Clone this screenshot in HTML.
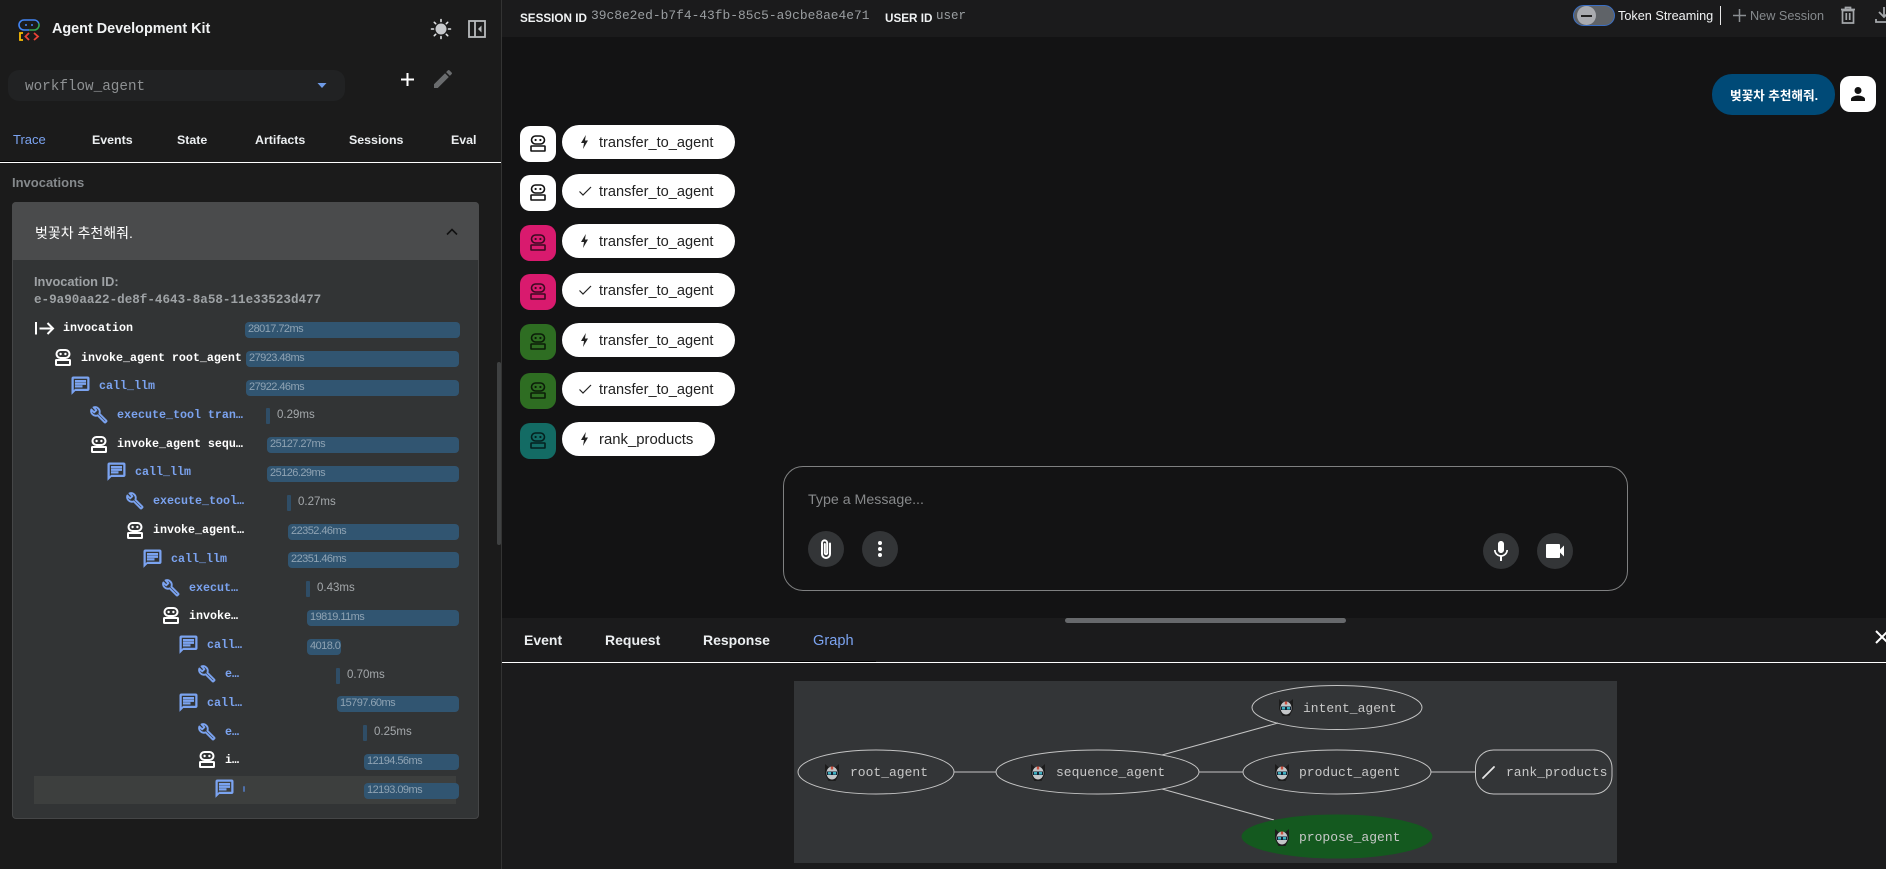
<!DOCTYPE html>
<html lang="en"><head><meta charset="utf-8"><title>Agent Development Kit</title>
<style>
html,body{margin:0;padding:0;width:1886px;height:869px;overflow:hidden;background:#131314}
body{position:relative;font-family:"Liberation Sans","Noto Sans CJK KR",sans-serif;color:#fff}
.a,.t,.m,.b,.n,.av,.p,.i{position:absolute}
.t{white-space:nowrap;line-height:16px;height:16px}
.m{white-space:nowrap;font-family:"Liberation Mono","Noto Sans CJK KR",monospace;line-height:16px;height:16px}
.tab{font-size:14px;font-weight:700;color:#eceff1}
.tab2{font-size:12.400px;font-weight:700;color:#eceff1}
.tr{font-size:11.670px;font-weight:700;color:#fff;margin-top:1px}
.bl{color:#7ba3f0}
.b{height:16px;background:#315571;border-radius:4px;overflow:hidden;font-size:11px;letter-spacing:-.55px;line-height:15px;color:#8fa3b3;white-space:nowrap;padding-left:3px;box-sizing:border-box}
.n{font-size:11.500px;color:#a4a8ab;line-height:16px;white-space:nowrap;margin-top:1px}
.bs{width:4px;height:16px;background:#2f4d66;position:absolute;border-radius:1px}
.av{left:520px;width:36px;height:36px;border-radius:10px}
.av svg{position:absolute;left:10px;top:9px}
.p{left:562px;width:173px;height:34px;background:#fff;border-radius:17px;color:#222;font-size:14.600px;line-height:34px;white-space:nowrap}
.p span{position:absolute;left:37px;top:1px}
.p svg{position:absolute;left:14px;top:8px}
.c{position:absolute;width:36px;height:36px;border-radius:50%;background:#333537}
.c svg{position:absolute;left:6px;top:6px}
</style></head><body>
<svg width="0" height="0" style="position:absolute">
<defs>
<symbol id="rb" viewBox="0 0 16 17"><rect x="1.500" y="1" width="13" height="8" rx="4" fill="none" stroke="currentColor" stroke-width="2"/><circle cx="5.600" cy="5" r="1.200" fill="currentColor"/><circle cx="10.400" cy="5" r="1.200" fill="currentColor"/><rect x="1" y="11" width="14" height="5" rx=".5" fill="none" stroke="currentColor" stroke-width="2"/></symbol>
<symbol id="rb2" viewBox="0 0 16 17"><rect x="1.500" y="1" width="13" height="8" rx="4" fill="none" stroke="currentColor" stroke-width="1.600"/><circle cx="5.600" cy="5" r="1.100" fill="currentColor"/><circle cx="10.400" cy="5" r="1.100" fill="currentColor"/><rect x="1" y="11" width="14" height="5" rx=".5" fill="none" stroke="currentColor" stroke-width="1.600"/></symbol>
<symbol id="ch" viewBox="0 0 24 24"><path fill="#7ba3f0" stroke="#7ba3f0" stroke-width=".6" d="M20 2H4c-1.100 0-2 .9-2 2v18l4-4h14c1.100 0 2-.9 2-2V4c0-1.100-.9-2-2-2zm0 14H6l-2 2V4h16v12zM6 12h8v2H6zm0-3h12v2H6zm0-3h12v2H6z"/></symbol>
<symbol id="wr" viewBox="0 0 24 24"><path fill="none" stroke="#7ba3f0" stroke-width="2.500" stroke-linejoin="round" d="M21.800 19.500l-9.300-9.300c.9-2.300.4-5-1.500-6.900-1.700-1.700-4.200-2.200-6.300-1.500L8.500 5.600 5.600 8.500 1.800 4.700c-.7 2.100-.2 4.600 1.500 6.300 1.900 1.900 4.600 2.400 6.900 1.500l9.300 9.300c.3.300.8.300 1.100 0l1.200-1.200c.3-.3.3-.7 0-1.100z"/></symbol>
<symbol id="bo" viewBox="0 0 18 18"><path fill="#222" d="M9.800 2L5 10h3l-1 6 5-8.500H9z"/></symbol>
<symbol id="ck" viewBox="0 0 18 18"><path fill="none" stroke="#222" stroke-width="1.200" d="M3.500 9.500l3.500 3.500 8-8"/></symbol>
<symbol id="bot" viewBox="0 0 16 17"><path d="M1 0l3.500 3h7L15 0v10l-3.500 7h-7L1 10z" fill="#1c1c1c"/><ellipse cx="8" cy="9" rx="5.500" ry="6.500" fill="#c4c6c8"/><rect x="6.800" y="2.500" width="2.400" height="3" fill="#c9503f"/><rect x="3" y="7.500" width="10" height="3.500" fill="#123"/><rect x="4" y="8" width="3" height="2.500" fill="#3fb0c0"/><rect x="9" y="8" width="3" height="2.500" fill="#3fb0c0"/></symbol>
</defs></svg>

<!-- sidebar -->
<div class="a" style="left:0;top:0;width:501px;height:869px;background:#1b1b1b;border-right:1px solid #333"></div>
<svg class="a" style="left:17px;top:18px" width="24" height="24" viewBox="0 0 24 24"><path d="M12 2H7a5 5 0 0 0 0 10h5" fill="none" stroke="#4285f4" stroke-width="1.600"/><path d="M12 2h5a5 5 0 0 1 4.800 3.500" fill="none" stroke="#4285f4" stroke-width="1.600"/><path d="M21.800 5.500A5 5 0 0 1 17 12h-5" fill="none" stroke="#34a853" stroke-width="1.600"/><circle cx="9" cy="7" r="1" fill="#4285f4"/><circle cx="15" cy="7" r="1" fill="#4285f4"/><path d="M6 15H3v7h3" fill="none" stroke="#fbbc04" stroke-width="1.800"/><path d="M12 15l-3.500 3.500L12 22" fill="none" stroke="#ea4335" stroke-width="1.800"/><path d="M17 15l4 3.500-4 3.500" fill="none" stroke="#ea4335" stroke-width="1.800"/></svg>
<div class="t" style="left:52px;top:21px;font-size:14.400px;font-weight:700;color:#f1f3f4">Agent Development Kit</div>
<svg class="a" style="left:430px;top:18px" width="22" height="22" viewBox="0 0 22 22"><circle cx="11" cy="11" r="5.500" fill="#c7c9cc"/><g stroke="#e0e2e4" stroke-width="1.600" stroke-linecap="round"><path d="M11 1.500v2M11 18.500v2M1.500 11h2M18.500 11h2M4.300 4.300l1.400 1.400M16.300 16.300l1.400 1.400M4.300 17.700l1.400-1.400M16.300 5.700l1.400-1.400"/></g></svg>
<svg class="a" style="left:468px;top:20px" width="18" height="18" viewBox="0 0 18 18"><rect x="1" y="1" width="16" height="16" fill="none" stroke="#b8bbbd" stroke-width="1.800"/><path d="M7 1v16" stroke="#b8bbbd" stroke-width="1.800"/><path d="M13.500 5.500L10 9l3.500 3.500z" fill="#b8bbbd"/></svg>
<div class="a" style="left:8px;top:70px;width:337px;height:31px;background:#212223;border-radius:11px"></div>
<div class="m" style="left:25px;top:79px;font-size:14.300px;color:#8e9193">workflow_agent</div>
<svg class="a" style="left:317px;top:82px" width="10" height="7"><path d="M.5 1h9L5 6z" fill="#6f9be6"/></svg>
<svg class="a" style="left:400px;top:72px" width="15" height="15"><path d="M7.500 1v13M1 7.500h13" stroke="#fff" stroke-width="2"/></svg>
<svg class="a" style="left:431px;top:67px" width="24" height="24" viewBox="0 0 24 24"><path fill="#6a6c6e" d="M3 17.250V21h3.750L17.810 9.940l-3.750-3.750L3 17.250zM20.710 7.040a1 1 0 0 0 0-1.410l-2.340-2.340a1 1 0 0 0-1.410 0l-1.830 1.830 3.750 3.750 1.830-1.830z"/></svg>
<div class="t" style="left:13px;top:132px;color:#7ba3f0;font-size:13px">Trace</div>
<div class="t tab2" style="left:92px;top:132px">Events</div>
<div class="t tab2" style="left:177px;top:132px">State</div>
<div class="t tab2" style="left:255px;top:132px">Artifacts</div>
<div class="t tab2" style="left:349px;top:132px">Sessions</div>
<div class="t tab2" style="left:451px;top:132px">Eval</div>
<div class="a" style="left:0;top:162px;width:501px;height:1px;background:#fff"></div>
<div class="a" style="left:0;top:161px;width:70px;height:1px;background:#000"></div>
<div class="t" style="left:12px;top:175px;font-size:13px;font-weight:700;color:#85898c">Invocations</div>
<div class="a" style="left:12px;top:202px;width:467px;height:617px;background:#323435;border:1px solid #454647;box-sizing:border-box;border-radius:4px"></div>
<div class="a" style="left:12px;top:202px;width:467px;height:58px;background:#4a4b4c;border-radius:4px 4px 0 0"></div>
<div class="t" style="left:35px;top:225px;font-size:14px;color:#fff">벚꽃차 추천해줘.</div>
<svg class="a" style="left:446px;top:227px" width="12" height="10"><path d="M1 7.500l5-5 5 5" fill="none" stroke="#111" stroke-width="1.600"/></svg>
<div class="t" style="left:34px;top:274px;font-size:12.800px;font-weight:700;color:#9ea2a5">Invocation ID:</div>
<div class="m" style="left:34px;top:292px;font-size:12.600px;font-weight:700;color:#9ea2a5">e-9a90aa22-de8f-4643-8a58-11e33523d477</div>

<!-- row highlight -->
<div class="a" style="left:34px;top:776px;width:422px;height:28px;background:#3d3f3e"></div>

<!-- trace rows -->
<svg class="a" style="left:35px;top:322px" width="20" height="13" viewBox="0 0 20 13"><path d="M1 0v12.500M4.500 6.500H18M12.500 1l5.500 5.500-5.500 5.500" fill="none" stroke="#fff" stroke-width="2"/></svg>
<div class="m tr" style="left:63px;top:319px">invocation</div>
<svg class="i" style="left:55px;top:349px;color:#fff" width="16" height="17"><use href="#rb"/></svg>
<div class="m tr" style="left:81px;top:349px">invoke_agent root_agent</div>
<svg class="i" style="left:70px;top:375px" width="21" height="21"><use href="#ch"/></svg>
<div class="m tr bl" style="left:99px;top:377px">call_llm</div>
<svg class="i" style="left:90px;top:406px" width="18" height="18"><use href="#wr"/></svg>
<div class="m tr bl" style="left:117px;top:406px">execute_tool tran…</div>
<svg class="i" style="left:91px;top:436px;color:#fff" width="16" height="17"><use href="#rb"/></svg>
<div class="m tr" style="left:117px;top:435px">invoke_agent sequ…</div>
<svg class="i" style="left:106px;top:461px" width="21" height="21"><use href="#ch"/></svg>
<div class="m tr bl" style="left:135px;top:463px">call_llm</div>
<svg class="i" style="left:126px;top:492px" width="18" height="18"><use href="#wr"/></svg>
<div class="m tr bl" style="left:153px;top:492px">execute_tool…</div>
<svg class="i" style="left:127px;top:522px;color:#fff" width="16" height="17"><use href="#rb"/></svg>
<div class="m tr" style="left:153px;top:521px">invoke_agent…</div>
<svg class="i" style="left:142px;top:548px" width="21" height="21"><use href="#ch"/></svg>
<div class="m tr bl" style="left:171px;top:550px">call_llm</div>
<svg class="i" style="left:162px;top:579px" width="18" height="18"><use href="#wr"/></svg>
<div class="m tr bl" style="left:189px;top:579px">execut…</div>
<svg class="i" style="left:163px;top:607px;color:#fff" width="16" height="17"><use href="#rb"/></svg>
<div class="m tr" style="left:189px;top:607px">invoke…</div>
<svg class="i" style="left:178px;top:634px" width="21" height="21"><use href="#ch"/></svg>
<div class="m tr bl" style="left:207px;top:636px">call…</div>
<svg class="i" style="left:198px;top:665px" width="18" height="18"><use href="#wr"/></svg>
<div class="m tr bl" style="left:225px;top:665px">e…</div>
<svg class="i" style="left:178px;top:692px" width="21" height="21"><use href="#ch"/></svg>
<div class="m tr bl" style="left:207px;top:694px">call…</div>
<svg class="i" style="left:198px;top:723px" width="18" height="18"><use href="#wr"/></svg>
<div class="m tr bl" style="left:225px;top:723px">e…</div>
<svg class="i" style="left:199px;top:751px;color:#fff" width="16" height="17"><use href="#rb"/></svg>
<div class="m tr" style="left:225px;top:751px">i…</div>
<svg class="i" style="left:214px;top:778px" width="21" height="21"><use href="#ch"/></svg>
<div class="a" style="left:243px;top:786px;width:2px;height:6px;background:#4f6fa8;border-radius:2px"></div>

<!-- bars -->
<div class="b" style="left:245px;top:322px;width:215px">28017.72ms</div>
<div class="b" style="left:246px;top:351px;width:213px">27923.48ms</div>
<div class="b" style="left:246px;top:380px;width:213px">27922.46ms</div>
<div class="bs" style="left:266px;top:408px"></div><div class="n" style="left:277px;top:406px">0.29ms</div>
<div class="b" style="left:267px;top:437px;width:192px">25127.27ms</div>
<div class="b" style="left:267px;top:466px;width:192px">25126.29ms</div>
<div class="bs" style="left:287px;top:495px"></div><div class="n" style="left:298px;top:493px">0.27ms</div>
<div class="b" style="left:288px;top:524px;width:171px">22352.46ms</div>
<div class="b" style="left:288px;top:552px;width:171px">22351.46ms</div>
<div class="bs" style="left:306px;top:581px"></div><div class="n" style="left:317px;top:579px">0.43ms</div>
<div class="b" style="left:307px;top:610px;width:152px">19819.11ms</div>
<div class="b" style="left:307px;top:639px;width:34px">4018.0</div>
<div class="bs" style="left:336px;top:668px"></div><div class="n" style="left:347px;top:666px">0.70ms</div>
<div class="b" style="left:337px;top:696px;width:122px">15797.60ms</div>
<div class="bs" style="left:363px;top:725px"></div><div class="n" style="left:374px;top:723px">0.25ms</div>
<div class="b" style="left:364px;top:754px;width:95px">12194.56ms</div>
<div class="b" style="left:364px;top:783px;width:95px">12193.09ms</div>
<div class="a" style="left:497px;top:362px;width:4px;height:183px;background:#3f4142;border-radius:2px"></div>

<!-- top bar -->
<div class="a" style="left:502px;top:0;width:1384px;height:37px;background:#1b1b1c"></div>
<div class="t" style="left:520px;top:11px;font-size:11.700px;font-weight:700;color:#f1f3f4">SESSION ID</div>
<div class="m" style="left:591px;top:8px;font-size:12.900px;color:#9a9ea1">39c8e2ed-b7f4-43fb-85c5-a9cbe8ae4e71</div>
<div class="t" style="left:885px;top:11px;font-size:11.700px;font-weight:700;color:#f1f3f4">USER ID</div>
<div class="m" style="left:936px;top:8px;font-size:12.500px;color:#9a9ea1">user</div>
<div class="a" style="left:1573px;top:5px;width:42px;height:21px;background:#5f6368;border:1px solid #3b6fc4;border-radius:11px;box-sizing:border-box"></div>
<div class="a" style="left:1577px;top:6px;width:19px;height:19px;background:#a9abb0;border-radius:50%"></div>
<div class="a" style="left:1581px;top:15px;width:11px;height:2px;background:#222"></div>
<div class="t" style="left:1618px;top:8px;font-size:12.700px;color:#f1f3f4">Token Streaming</div>
<div class="a" style="left:1720px;top:6px;width:1px;height:19px;background:#e8e8e8"></div>
<svg class="a" style="left:1733px;top:9px" width="13" height="13"><path d="M6.500 0v13M0 6.500h13" stroke="#8b8f92" stroke-width="1.500"/></svg>
<div class="t" style="left:1750px;top:8px;font-size:12.700px;color:#85898c">New Session</div>
<svg class="a" style="left:1840px;top:6px" width="16" height="18" viewBox="0 0 16 18"><path d="M2.500 4.500h11V17h-11zM1 3.500h14M5.500 3V1.500h5V3M6.300 7v7M9.700 7v7" fill="none" stroke="#a4a7aa" stroke-width="1.700"/></svg>
<svg class="a" style="left:1875px;top:7px" width="11" height="17" viewBox="0 0 11 17"><path d="M9 0v9M4 5l5 5 5-5M1 12v3h20" fill="none" stroke="#a4a7aa" stroke-width="1.800"/></svg>

<!-- user msg -->
<div class="a" style="left:1712px;top:74px;width:123px;height:41px;background:#004a77;border-radius:20px"></div>
<div class="t" style="left:1730px;top:88px;font-size:12.600px;font-weight:700;color:#fff">벚꽃차 추천해줘.</div>
<div class="a" style="left:1840px;top:76px;width:36px;height:36px;background:#fff;border-radius:10px"></div>
<svg class="a" style="left:1850px;top:86px" width="16" height="16" viewBox="0 0 16 16"><circle cx="8" cy="4.500" r="3.500" fill="#111"/><path d="M1 15v-2c0-2 4-3.500 7-3.500s7 1.500 7 3.500v2z" fill="#111"/></svg>

<!-- agent rows -->
<div class="av" style="top:126px;background:#fff;color:#111"><svg width="16" height="17"><use href="#rb2"/></svg></div>
<div class="p" style="top:125px"><svg width="18" height="18"><use href="#bo"/></svg><span>transfer_to_agent</span></div>
<div class="av" style="top:175px;background:#fff;color:#111"><svg width="16" height="17"><use href="#rb2"/></svg></div>
<div class="p" style="top:174px"><svg width="18" height="18"><use href="#ck"/></svg><span>transfer_to_agent</span></div>
<div class="av" style="top:225px;background:#d91a6e;color:#3a0a20"><svg width="16" height="17"><use href="#rb2"/></svg></div>
<div class="p" style="top:224px"><svg width="18" height="18"><use href="#bo"/></svg><span>transfer_to_agent</span></div>
<div class="av" style="top:274px;background:#d91a6e;color:#3a0a20"><svg width="16" height="17"><use href="#rb2"/></svg></div>
<div class="p" style="top:273px"><svg width="18" height="18"><use href="#ck"/></svg><span>transfer_to_agent</span></div>
<div class="av" style="top:324px;background:#2e6d22;color:#0b1c08"><svg width="16" height="17"><use href="#rb2"/></svg></div>
<div class="p" style="top:323px"><svg width="18" height="18"><use href="#bo"/></svg><span>transfer_to_agent</span></div>
<div class="av" style="top:373px;background:#2e6d22;color:#0b1c08"><svg width="16" height="17"><use href="#rb2"/></svg></div>
<div class="p" style="top:372px"><svg width="18" height="18"><use href="#ck"/></svg><span>transfer_to_agent</span></div>
<div class="av" style="top:423px;background:#136b64;color:#04201e"><svg width="16" height="17"><use href="#rb2"/></svg></div>
<div class="p" style="top:422px;width:153px"><svg width="18" height="18"><use href="#bo"/></svg><span style="font-size:14.900px">rank_products</span></div>

<!-- input -->
<div class="a" style="left:783px;top:466px;width:845px;height:125px;border:1px solid #7f8081;border-radius:20px;box-sizing:border-box"></div>
<div class="t" style="left:808px;top:492px;font-size:14.200px;color:#87898b">Type a Message...</div>
<div class="c" style="left:808px;top:531px"><svg width="24" height="24" viewBox="0 0 24 24"><path fill="none" stroke="#fff" stroke-width="2" stroke-linecap="round" d="M16 6.500V17a4 4 0 0 1-8 0V6a2.600 2.600 0 0 1 5.200 0v10a1.200 1.200 0 0 1-2.400 0V7"/></svg></div>
<div class="c" style="left:862px;top:531px"><svg width="24" height="24" viewBox="0 0 24 24"><circle cx="12" cy="6" r="2" fill="#fff"/><circle cx="12" cy="12" r="2" fill="#fff"/><circle cx="12" cy="18" r="2" fill="#fff"/></svg></div>
<div class="c" style="left:1483px;top:533px"><svg width="24" height="24" viewBox="0 0 24 24"><path fill="#fff" d="M12 14c1.660 0 3-1.340 3-3V5c0-1.660-1.340-3-3-3S9 3.340 9 5v6c0 1.660 1.340 3 3 3zm5.300-3c0 3-2.540 5.100-5.300 5.100S6.700 14 6.700 11H5c0 3.410 2.720 6.230 6 6.720V22h2v-4.280c3.280-.48 6-3.300 6-6.720h-1.700z"/></svg></div>
<div class="c" style="left:1537px;top:533px"><svg width="24" height="24" viewBox="0 0 24 24"><path fill="#fff" d="M17 10.500V6c0-.55-.45-1-1-1H4c-.55 0-1 .45-1 1v12c0 .55.45 1 1 1h12c.55 0 1-.45 1-1v-4.500l4 4v-11l-4 4z"/></svg></div>

<!-- bottom panel -->
<div class="a" style="left:502px;top:618px;width:1384px;height:251px;background:#1b1b1c"></div>
<div class="a" style="left:1065px;top:618px;width:281px;height:5px;background:#67696c;border-radius:3px"></div>
<div class="t tab" style="left:524px;top:632px">Event</div>
<div class="t tab" style="left:605px;top:632px">Request</div>
<div class="t tab" style="left:703px;top:632px">Response</div>
<div class="t" style="left:813px;top:633px;color:#7ba3f0;font-size:14.600px">Graph</div>
<div class="a" style="left:502px;top:662px;width:1384px;height:1px;background:#fff"></div>
<div class="a" style="left:790px;top:661px;width:86px;height:1px;background:#000"></div>
<svg class="a" style="left:1875px;top:630px" width="11" height="14"><path d="M1 1l12 12M13 1L1 13" stroke="#fff" stroke-width="2"/></svg>

<!-- graph -->
<svg class="a" style="left:794px;top:681px" width="823" height="182" viewBox="794 681 823 182">
<rect x="794" y="681" width="823" height="182" fill="#333537"/>
<g stroke="#c4c4c4" stroke-width="1" fill="none">
<ellipse cx="876" cy="772" rx="78" ry="22"/>
<ellipse cx="1097.500" cy="772" rx="101.500" ry="22"/>
<ellipse cx="1337" cy="707.500" rx="85" ry="22"/>
<ellipse cx="1337" cy="772" rx="94" ry="22"/>
<rect x="1475.500" y="750" width="136.500" height="44" rx="18"/>
<path d="M954 772h42M1199 772h44M1431 772h44M1162 755L1278 723M1162 789L1274 820"/>
</g>
<ellipse cx="1337" cy="836.500" rx="95.500" ry="22" fill="#14591f"/>
<g font-family="'Liberation Mono',monospace" font-size="13" fill="#c8c8c8">
<text x="850" y="776">root_agent</text>
<text x="1056" y="776">sequence_agent</text>
<text x="1303" y="712">intent_agent</text>
<text x="1299" y="776">product_agent</text>
<text x="1299" y="841">propose_agent</text>
<text x="1506" y="776">rank_products</text>
</g>
<use href="#bot" x="824" y="764" width="16" height="17"/>
<use href="#bot" x="1030" y="764" width="16" height="17"/>
<use href="#bot" x="1278" y="699" width="16" height="17"/>
<use href="#bot" x="1274" y="764" width="16" height="17"/>
<use href="#bot" x="1274" y="829" width="16" height="17"/>
<path d="M1483 778L1494 767" stroke="#e6e6e6" stroke-width="1.800" stroke-linecap="round"/>
</svg>
</body></html>
